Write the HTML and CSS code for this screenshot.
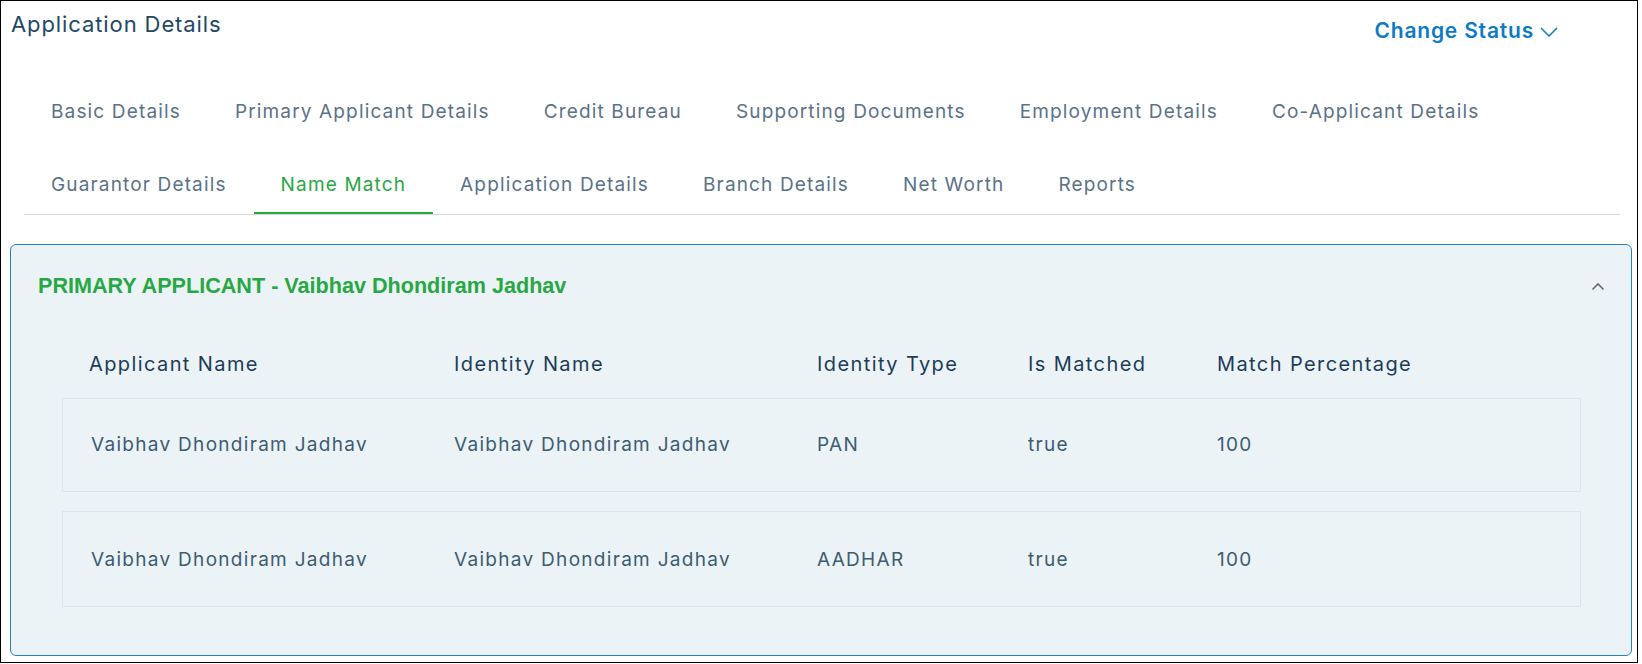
FILE: index.html
```html
<!DOCTYPE html>
<html lang="en">
<head>
<meta charset="utf-8">
<title>Application Details</title>
<link rel="stylesheet" href="styles.css">
</head>
<body>
<div class="page">
  <div class="header">
    <h1 class="title">Application Details</h1>
    <button class="change-status" type="button">Change Status
      <svg class="chev-down" width="18" height="10" viewBox="0 0 18 10"><polyline points="1,1 9,9 17,1" fill="none" stroke="#0d7bc4" stroke-width="1.5"/></svg>
    </button>
  </div>
  <nav class="tabs">
    <a class="tab">Basic Details</a>
    <a class="tab">Primary Applicant Details</a>
    <a class="tab">Credit Bureau</a>
    <a class="tab">Supporting Documents</a>
    <a class="tab">Employment Details</a>
    <a class="tab">Co-Applicant Details</a>
    <a class="tab">Guarantor Details</a>
    <a class="tab active">Name Match</a>
    <a class="tab">Application Details</a>
    <a class="tab">Branch Details</a>
    <a class="tab">Net Worth</a>
    <a class="tab">Reports</a>
  </nav>
  <section class="card">
    <div class="card-head">
      <h2 class="card-title">PRIMARY APPLICANT - Vaibhav Dhondiram Jadhav</h2>
      <svg class="chev-up" width="14" height="9" viewBox="0 0 14 9"><polyline points="1.5,7.5 7,2 12.5,7.5" fill="none" stroke="#6a6a6a" stroke-width="1.6"/></svg>
    </div>
    <div class="table">
      <div class="thead">
        <div>Applicant Name</div>
        <div>Identity Name</div>
        <div>Identity Type</div>
        <div>Is Matched</div>
        <div>Match Percentage</div>
      </div>
      <div class="trow">
        <div>Vaibhav Dhondiram Jadhav</div>
        <div>Vaibhav Dhondiram Jadhav</div>
        <div>PAN</div>
        <div>true</div>
        <div>100</div>
      </div>
      <div class="trow">
        <div>Vaibhav Dhondiram Jadhav</div>
        <div>Vaibhav Dhondiram Jadhav</div>
        <div>AADHAR</div>
        <div>true</div>
        <div>100</div>
      </div>
    </div>
  </section>
</div>
</body>
</html>
```
FILE: styles.css
```css
* { box-sizing: border-box; }
html, body { margin: 0; padding: 0; background: #fff; }
body { font-family: Inter, "Noto Sans", Roboto, sans-serif; }

.page {
  width: 1638px;
  height: 663px;
  border: 1px solid #000;
  overflow: hidden;
}

.header {
  height: 80px;
  display: flex;
  justify-content: space-between;
  align-items: flex-start;
}
.title {
  margin: 0;
  padding: 8px 0 0 10px;
  font-size: 22px;
  font-weight: 400;
  letter-spacing: 0.9px;
  line-height: 30px;
  color: #1e4966;
}
.change-status {
  margin: 16px 79px 0 0;
  padding: 0;
  border: 0;
  background: none;
  display: flex;
  align-items: center;
  gap: 6px;
  font-family: inherit;
  font-size: 21px;
  font-weight: 600;
  letter-spacing: 0.8px;
  line-height: 28px;
  color: #0d7bc4;
}
.chev-down { margin-top: 2px; }

.tabs {
  margin: 0 17px 0 23px;
  display: flex;
  flex-wrap: wrap;
  row-gap: 13px;
  border-bottom: 1px solid #d8d8d8;
}
.tab {
  height: 60px;
  padding: 2px 27px 0;
  display: flex;
  align-items: center;
  font-size: 19px;
  letter-spacing: 1.15px;
  color: #5a7288;
  border-bottom: 2px solid transparent;
}
.tab.active {
  color: #28a745;
  border-bottom-color: #28a745;
}

.card {
  margin: 29px 5px 0 9px;
  height: 412px;
  border: 1px solid #2b80c2;
  border-radius: 6px;
  background: #ecf3f6;
}
.card-head {
  height: 82px;
  padding: 0 26px 0 27px;
  display: flex;
  align-items: center;
  justify-content: space-between;
}
.card-title {
  margin: 0;
  font-family: "Liberation Sans", Arial, sans-serif;
  font-size: 21.6px;
  font-weight: 700;
  color: #28a745;
}

.table { margin: 17px 50px 0 51px; display: flex; flex-direction: column; }
.thead, .trow {
  display: grid;
  grid-template-columns: 363px 363px 211px 189px 1fr;
  align-items: center;
}
.thead {
  height: 40px;
  padding-left: 29px;
  margin-bottom: 14px;
  font-size: 20px;
  letter-spacing: 1.4px;
  color: #1d3c5a;
}
.thead > div:first-child { margin-left: -2px; }
.trow {
  height: 94px;
  padding-left: 28px;
  padding-bottom: 2px;
  border: 1px solid #d9e6f1;
  font-size: 19px;
  letter-spacing: 1.3px;
  color: #3d5c72;
}
.trow + .trow { margin-top: 19px; height: 96px; padding-bottom: 0; }
```
